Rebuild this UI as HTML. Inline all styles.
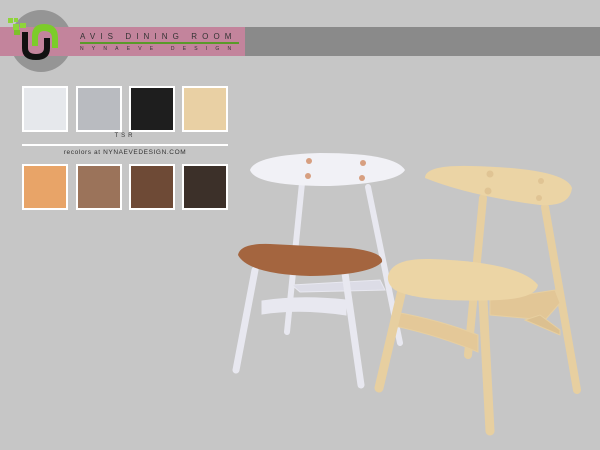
<!DOCTYPE html>
<html><head><style>
body{margin:0;width:600px;height:450px;background:#c6c6c6;position:relative;overflow:hidden;font-family:"Liberation Sans",sans-serif}
.a{position:absolute}
.sw{position:absolute;width:42px;height:42px;border:2px solid #fff;box-sizing:content-box}
</style></head><body>
<div class="a" style="left:245px;top:27px;width:355px;height:29px;background:#8a8a8a"></div>
<div class="a" style="left:10px;top:10px;width:62px;height:62px;border-radius:50%;background:#959595"></div>
<div class="a" style="left:0;top:27px;width:245px;height:29px;background:#c3849c"></div>
<svg class="a" style="left:0;top:0" width="80" height="80">
<rect x="8" y="18" width="5" height="5" fill="#8fd43a"/><rect x="14" y="18" width="4" height="4" fill="#8fd43a"/><rect x="13" y="24" width="6" height="6" fill="#8fd43a"/><rect x="20" y="23" width="6" height="5" fill="#8fd43a"/><rect x="14" y="30" width="6" height="5" fill="#7cc12a"/>
<path d="M22 32 L22 48 Q22 60 36 60 Q50 60 50 48 L50 38 L44 38 L44 48 Q44 54 36 54 Q28 54 28 48 L28 32Z" fill="#111"/>
<path d="M32 46 L32 36 Q32 24 44 24 Q58 24 58 38 L58 48 L52 48 L52 38 Q52 31 44 31 Q38 31 38 38 L38 46Z" fill="#7ccc2a"/>
</svg>
<div class="a" style="left:80px;top:32px;font-size:8px;letter-spacing:5.1px;color:#333;white-space:nowrap">AVIS DINING ROOM</div>
<div class="a" style="left:80px;top:42px;width:159px;height:2px;background:#5a9a2a"></div>
<div class="a" style="left:80px;top:46px;font-size:5px;letter-spacing:8.2px;color:#333;white-space:nowrap">NYNAEVE DESIGN</div>

<div class="sw" style="left:22px;top:86px;background:#e6e8ec"></div>
<div class="sw" style="left:76px;top:86px;background:#b9bbc0"></div>
<div class="sw" style="left:129px;top:86px;background:#1e1e1e"></div>
<div class="sw" style="left:182px;top:86px;background:#e9d0a4"></div>
<div class="a" style="left:0;top:133px;width:250px;text-align:center;font-size:6px;letter-spacing:3px;color:#333">TSR</div>
<div class="a" style="left:22px;top:144px;width:206px;height:2px;background:#fff"></div>
<div class="a" style="left:22px;top:149px;width:206px;text-align:center;font-size:6.5px;letter-spacing:0.6px;color:#333">recolors at NYNAEVEDESIGN.COM</div>
<div class="sw" style="left:22px;top:164px;background:#e8a468"></div>
<div class="sw" style="left:76px;top:164px;background:#9b735a"></div>
<div class="sw" style="left:129px;top:164px;background:#6e4a36"></div>
<div class="sw" style="left:182px;top:164px;background:#3c3029"></div>

<svg class="a" style="left:0;top:0" width="600" height="450">
<g stroke="#e8e8f0" stroke-linecap="round" fill="none">
<line x1="302" y1="183" x2="287" y2="332" stroke-width="6"/>
<line x1="368" y1="187" x2="400" y2="343" stroke-width="6"/>
<path d="M262 301 Q300 295 346 300 L346 315 Q300 308 262 314Z" fill="#e8e8f0" stroke-width="1"/>
<path d="M292 285 L380 280 L385 290 L300 292Z" fill="#dcdce6" stroke-width="1"/>
<line x1="255" y1="270" x2="236" y2="370" stroke-width="7"/>
<line x1="345" y1="273" x2="361" y2="385" stroke-width="7"/>
</g>
<path d="M250 170 Q255 155 320 153 Q395 153 405 170 Q398 183 330 186 Q255 186 250 170Z" fill="#f1f1f6"/>
<circle cx="309" cy="161" r="3" fill="#d79f80"/><circle cx="363" cy="163" r="3" fill="#d79f80"/><circle cx="308" cy="176" r="3" fill="#d79f80"/><circle cx="362" cy="178" r="3" fill="#d79f80"/>
<path d="M238 255 Q240 243 270 244 L350 248 Q384 252 382 262 Q370 275 310 276 Q248 274 238 255Z" fill="#a4653f"/>

<g stroke="#e7cfa0" stroke-linecap="round" fill="none">
<line x1="483" y1="198" x2="468" y2="355" stroke-width="8"/>
<line x1="545" y1="207" x2="577" y2="390" stroke-width="8"/>
<path d="M490 300 L555 290 L560 303 L545 320 L490 315Z" fill="#e2c696" stroke-width="1"/>
<path d="M540 315 L560 330 L560 335 L525 320Z" fill="#dcc090" stroke-width="1"/>
<path d="M395 312 Q440 320 478 335 L478 352 Q440 336 395 326Z" fill="#e4c898" stroke-width="1"/>
<line x1="402" y1="290" x2="379" y2="388" stroke-width="9"/>
<line x1="483" y1="300" x2="490" y2="431" stroke-width="9"/>
</g>
<path d="M425 178 Q425 165 470 166 Q565 168 572 188 Q570 207 540 205 Q470 196 425 178Z" fill="#ebd4a5"/>
<circle cx="490" cy="174" r="3.5" fill="#e0c494"/><circle cx="488" cy="191" r="3.5" fill="#e0c494"/><circle cx="541" cy="181" r="3" fill="#e0c494"/><circle cx="539" cy="198" r="3" fill="#e0c494"/>
<path d="M388 276 Q392 258 430 259 Q520 262 538 285 Q536 298 500 300 Q420 303 395 290 Q387 284 388 276Z" fill="#ecd5a5"/>
</svg>
</body></html>
